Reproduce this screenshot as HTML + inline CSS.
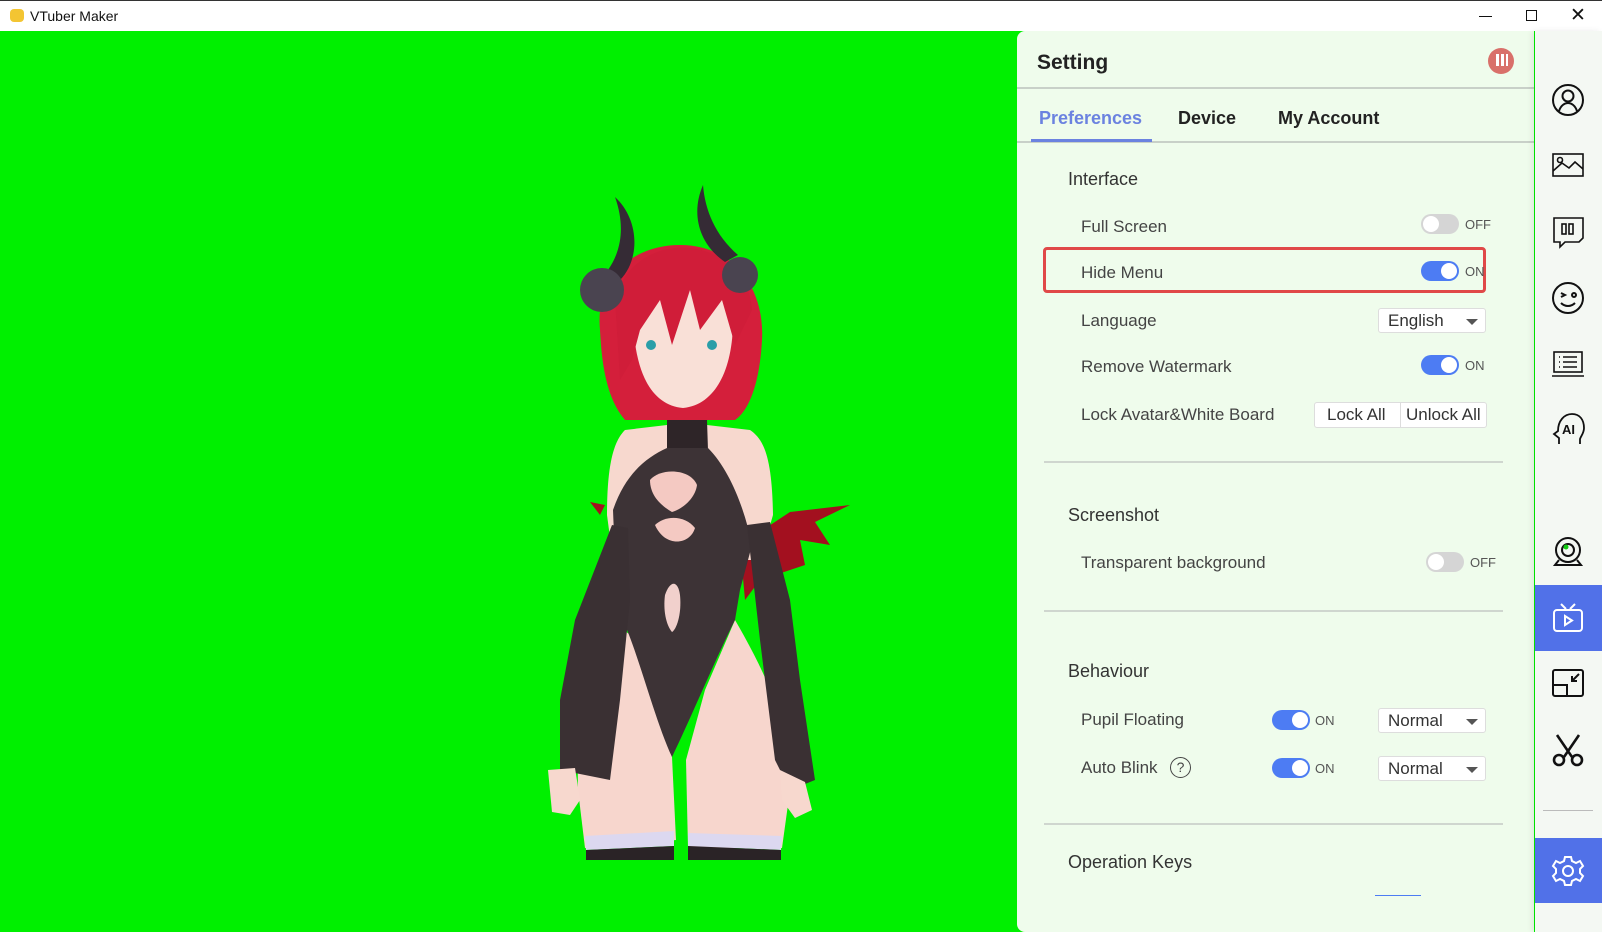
<!DOCTYPE html>
<html><head><meta charset="utf-8"><style>
*{margin:0;padding:0;box-sizing:border-box}
body{width:1602px;height:932px;overflow:hidden;background:#fff;font-family:"Liberation Sans",sans-serif;position:relative;color:#222}
.a{position:absolute}
.tb{left:0;top:0;width:1602px;height:31px;background:#fff;border-top:1px solid #333}
.green{left:0;top:31px;width:1602px;height:901px;background:#00f000}
.panel{left:1017px;top:31px;width:517px;height:901px;background:#effcec;border-radius:8px 0 0 8px}
.side{left:1535px;top:31px;width:67px;height:901px;background:#f4f8f3;box-shadow:-3px 0 6px rgba(0,0,0,.08)}
.t{position:absolute;white-space:nowrap}
.h{font-size:18px;color:#333}
.l{font-size:17px;color:#444}
.tog{position:absolute;width:38px;height:20px;border-radius:10px;background:#4d7cf3}
.tog::after{content:"";position:absolute;top:2px;left:20px;width:16px;height:16px;border-radius:50%;background:#fff}
.tog.off{background:#d5d5d5}.tog.off::after{left:2px}
.sm{font-size:13px;color:#555}
.dd{position:absolute;width:108px;height:25px;background:#fff;border:1px solid #ddd;border-radius:3px;font-size:17px;color:#333;padding:2px 0 0 9px}
.dd::after{content:"";position:absolute;right:7px;top:10px;border:6px solid transparent;border-top:6px solid #555;border-bottom:0}
.div{position:absolute;left:1044px;width:459px;height:2px;background:#cfd6cf}
.ic{position:absolute;left:1551px;width:34px;height:34px}
</style></head><body>
<div class="a tb"><div class="a" style="left:10px;top:8px;width:14px;height:13px;background:#f3c532;border-radius:4px"></div>
<div class="t" style="left:30px;top:7px;font-size:14px;color:#111">VTuber Maker</div>
<div class="a" style="left:1479px;top:15px;width:13px;height:1px;background:#111"></div>
<div class="a" style="left:1526px;top:9px;width:11px;height:11px;border:1px solid #111"></div>
<div class="t" style="left:1570px;top:3px;font-size:19px;color:#111">✕</div></div>
<div class="a green"></div>
<svg class="a" style="left:0;top:0" width="1000" height="932" viewBox="0 0 1000 932">
<path d="M740 545 L790 512 L850 505 L815 522 L830 545 L800 540 L805 565 L760 580 L745 600 Z" fill="#a3101f"/>
<path d="M605 505 L590 502 L600 515 Z" fill="#a3101f"/>
<path d="M605 620 L640 640 L672 757 L676 840 L585 848 L578 790 C576 720 590 660 605 620Z" fill="#f7d6cd"/>
<path d="M735 620 C770 680 795 740 790 790 L782 848 L688 848 L686 760 L705 690 Z" fill="#f7d6cd"/>
<path d="M585 836 L674 831 L674 846 L586 850Z" fill="#dcd8f0"/>
<path d="M688 833 L782 836 L781 850 L688 846Z" fill="#dcd8f0"/>
<path d="M586 850 L674 846 L674 860 L586 860Z" fill="#2a2326"/>
<path d="M688 846 L781 850 L781 860 L688 860Z" fill="#2a2326"/>
<path d="M625 430 C615 440 607 460 607 515 L613 560 L760 560 L773 515 C772 460 765 440 750 430 L707 425 L667 425Z" fill="#f7d8ce"/>
<path d="M667 420 L707 420 L708 448 C730 470 745 510 752 545 L740 590 L735 620 C715 660 690 720 672 757 C655 720 640 660 625 625 L615 560 L613 510 C625 475 645 458 667 448Z" fill="#3d3336"/>
<path d="M650 480 C660 468 690 468 697 485 C695 500 680 510 672 512 C660 505 650 495 650 480Z" fill="#f4c9c2"/>
<path d="M655 525 C665 515 685 515 695 528 C690 545 665 548 655 525Z" fill="#f4c9c2"/>
<path d="M665 595 C670 580 678 580 680 595 C682 615 676 630 672 632 C666 625 663 610 665 595Z" fill="#f1d0cc"/>
<path d="M612 525 L628 528 L630 600 L620 700 L610 780 L560 770 L560 700 L575 620 Z" fill="#3a3033"/>
<path d="M747 525 L770 522 L790 600 L800 680 L815 780 L790 790 L775 760 L760 640 Z" fill="#3a3033"/>
<path d="M548 770 L575 768 L580 800 L570 815 L552 812 Z" fill="#f7d8ce"/>
<path d="M780 770 L805 782 L812 810 L795 818 L782 800Z" fill="#f7d8ce"/>
<path d="M667 405 L707 405 L707 448 L667 448Z" fill="#2e2528"/>
<path d="M600 330 C595 280 630 245 680 245 C735 245 765 290 762 340 C760 380 750 410 735 420 L625 420 C608 400 602 370 600 330Z" fill="#d41f3b"/>
<path d="M633 310 C633 290 650 290 683 290 C720 290 733 300 733 320 C733 370 715 405 683 408 C650 405 633 370 633 310Z" fill="#f9e0d7"/>
<path d="M615 300 C625 260 660 245 690 248 C725 252 750 275 752 310 L735 345 L722 300 L700 330 L690 290 L672 345 L660 300 L640 330 L632 360 L620 380 Z" fill="#d01d39"/>
<circle cx="651" cy="345" r="5" fill="#2a9ea8"/><circle cx="712" cy="345" r="5" fill="#2a9ea8"/>
<path d="M615 197 C640 220 640 260 620 280 L608 270 C622 250 625 225 615 197Z" fill="#352b35"/>
<ellipse cx="602" cy="290" rx="22" ry="22" fill="#4a4450"/>
<path d="M703 185 C690 215 700 245 725 262 L738 255 C715 235 705 210 703 185Z" fill="#352b35"/>
<ellipse cx="740" cy="275" rx="18" ry="18" fill="#4a4450"/>
</svg>
<div class="a panel"></div>
<div class="t" style="left:1037px;top:51px;font-size:21px;font-weight:bold;color:#222">Setting</div>
<div class="a" style="left:1488px;top:48px;width:26px;height:26px;border-radius:50%;background:#d9706a"></div>
<div class="a" style="left:1496px;top:54px;width:3px;height:12px;background:#fff"></div><div class="a" style="left:1501px;top:54px;width:3px;height:12px;background:#fff"></div><div class="a" style="left:1506px;top:54px;width:2px;height:12px;background:#fff"></div>
<div class="a" style="left:1017px;top:87px;width:517px;height:2px;background:#c8d0c8"></div>
<div class="t" style="left:1039px;top:108px;font-size:18px;font-weight:bold;color:#6b82e0">Preferences</div>
<div class="t" style="left:1178px;top:108px;font-size:18px;font-weight:bold;color:#222">Device</div>
<div class="t" style="left:1278px;top:108px;font-size:18px;font-weight:bold;color:#222">My Account</div>
<div class="a" style="left:1017px;top:141px;width:517px;height:2px;background:#c8d0c8"></div>
<div class="a" style="left:1031px;top:139px;width:121px;height:3px;background:#6b82e0"></div>
<div class="t h" style="left:1068px;top:169px">Interface</div>
<div class="t l" style="left:1081px;top:217px">Full Screen</div>
<div class="tog off" style="left:1421px;top:214px"></div><div class="t sm" style="left:1465px;top:217px">OFF</div>
<div class="a" style="left:1043px;top:247px;width:443px;height:46px;border:3px solid #e04848;border-radius:4px"></div>
<div class="t l" style="left:1081px;top:263px">Hide Menu</div>
<div class="tog" style="left:1421px;top:261px"></div><div class="t sm" style="left:1465px;top:264px">ON</div>
<div class="t l" style="left:1081px;top:311px">Language</div>
<div class="dd" style="left:1378px;top:308px">English</div>
<div class="t l" style="left:1081px;top:357px">Remove Watermark</div>
<div class="tog" style="left:1421px;top:355px"></div><div class="t sm" style="left:1465px;top:358px">ON</div>
<div class="t l" style="left:1081px;top:405px">Lock Avatar&amp;White Board</div>
<div class="a" style="left:1314px;top:402px;width:173px;height:26px;background:#fff;border:1px solid #ddd;border-radius:3px"></div>
<div class="a" style="left:1400px;top:403px;width:1px;height:24px;background:#ddd"></div>
<div class="t" style="left:1327px;top:405px;font-size:17px;color:#333">Lock All</div>
<div class="t" style="left:1406px;top:405px;font-size:17px;color:#333">Unlock All</div>
<div class="div" style="top:461px"></div>
<div class="t h" style="left:1068px;top:505px">Screenshot</div>
<div class="t l" style="left:1081px;top:553px">Transparent background</div>
<div class="tog off" style="left:1426px;top:552px"></div><div class="t sm" style="left:1470px;top:555px">OFF</div>
<div class="div" style="top:610px"></div>
<div class="t h" style="left:1068px;top:661px">Behaviour</div>
<div class="t l" style="left:1081px;top:710px">Pupil Floating</div>
<div class="tog" style="left:1272px;top:710px"></div><div class="t sm" style="left:1315px;top:713px">ON</div>
<div class="dd" style="left:1378px;top:708px">Normal</div>
<div class="t l" style="left:1081px;top:758px">Auto Blink</div>
<div class="a" style="left:1170px;top:757px;width:21px;height:21px;border:1.5px solid #444;border-radius:50%;font-size:14px;text-align:center;line-height:18px;color:#444">?</div>
<div class="tog" style="left:1272px;top:758px"></div><div class="t sm" style="left:1315px;top:761px">ON</div>
<div class="dd" style="left:1378px;top:756px">Normal</div>
<div class="div" style="top:823px"></div>
<div class="t h" style="left:1068px;top:852px">Operation Keys</div>
<div class="a" style="left:1375px;top:895px;width:46px;height:1px;background:#4d7cf3"></div>
<div class="a side"></div>
<div class="a" style="left:1535px;top:585px;width:67px;height:66px;background:#5171e8"></div>
<div class="a" style="left:1535px;top:838px;width:67px;height:65px;background:#5171e8"></div>
<div class="a" style="left:1543px;top:810px;width:50px;height:1px;background:#bbb"></div>
<svg class="ic" style="top:83px" viewBox="0 0 34 34" fill="none" stroke="#111" stroke-width="2"><circle cx="17" cy="17" r="15"/><circle cx="17" cy="13" r="5.5"/><path d="M8 28c2-6 6-8 9-8s7 2 9 8"/></svg>
<svg class="ic" style="top:149px" viewBox="0 0 34 34" fill="none" stroke="#111" stroke-width="1.6"><rect x="2" y="5" width="30" height="22"/><circle cx="9" cy="11" r="2.5"/><path d="M2 22l9-8 7 5 6-6 8 7"/></svg>
<svg class="ic" style="top:215px" viewBox="0 0 34 34" fill="none" stroke="#111" stroke-width="1.6"><path d="M3 3h29v20l-4 4H14l-5 5v-5H3z"/><rect x="11" y="9" width="4" height="10"/><rect x="18" y="9" width="4" height="10"/></svg>
<svg class="ic" style="top:281px" viewBox="0 0 34 34" fill="none" stroke="#111" stroke-width="2"><circle cx="17" cy="17" r="15"/><path d="M10 12l4 2-4 2"/><circle cx="23" cy="14" r="2"/><path d="M10 22c4 4 10 4 14 0"/></svg>
<svg class="ic" style="top:347px" viewBox="0 0 34 34" fill="none" stroke="#111" stroke-width="1.6"><rect x="3" y="5" width="28" height="20"/><path d="M1 29h32M8 10h1M12 10h14M8 15h1M12 15h14M8 20h1M12 20h14"/></svg>
<svg class="ic" style="top:412px" viewBox="0 0 34 34" fill="none" stroke="#111" stroke-width="1.8"><path d="M8 32v-6l-5-4 4-3c0-10 6-17 14-17s12 6 12 14c0 5-3 8-4 11v5"/><text x="11" y="22" font-family="Liberation Sans" font-size="13" font-weight="bold" fill="#111" stroke="none">AI</text></svg>
<svg class="ic" style="top:536px" viewBox="0 0 34 34" fill="none" stroke="#111" stroke-width="2"><circle cx="17" cy="14" r="12"/><circle cx="17" cy="14" r="6"/><circle cx="15" cy="11" r="2.5" fill="#1c1" stroke="none"/><path d="M8 24l-4 5h26l-4-5"/></svg>
<svg class="ic" style="top:601px" viewBox="0 0 34 34" fill="none" stroke="#fff" stroke-width="2"><rect x="3" y="9" width="28" height="21" rx="3"/><path d="M10 3l5 5M24 3l-5 5M14 15v9l7-4.5z"/></svg>
<svg class="ic" style="top:666px" viewBox="0 0 34 34" fill="none" stroke="#111" stroke-width="2"><rect x="2" y="4" width="30" height="26" rx="2"/><path d="M2 19h14v11M28 8l-7 7M21 10v5h5"/></svg>
<svg class="ic" style="top:733px" viewBox="0 0 34 34" fill="none" stroke="#111" stroke-width="2.6"><path d="M6 2l15 22M28 2L13 24"/><circle cx="8" cy="27" r="5"/><circle cx="26" cy="27" r="5"/></svg>
<svg class="ic" style="top:854px" viewBox="0 0 34 34" fill="none" stroke="#fff" stroke-width="2"><path d="M14 3h6l1 4 4 2 4-2 3 5-3 3v4l3 3-3 5-4-2-4 2-1 4h-6l-1-4-4-2-4 2-3-5 3-3v-4l-3-3 3-5 4 2 4-2z"/><circle cx="17" cy="17" r="5"/></svg>
</body></html>
